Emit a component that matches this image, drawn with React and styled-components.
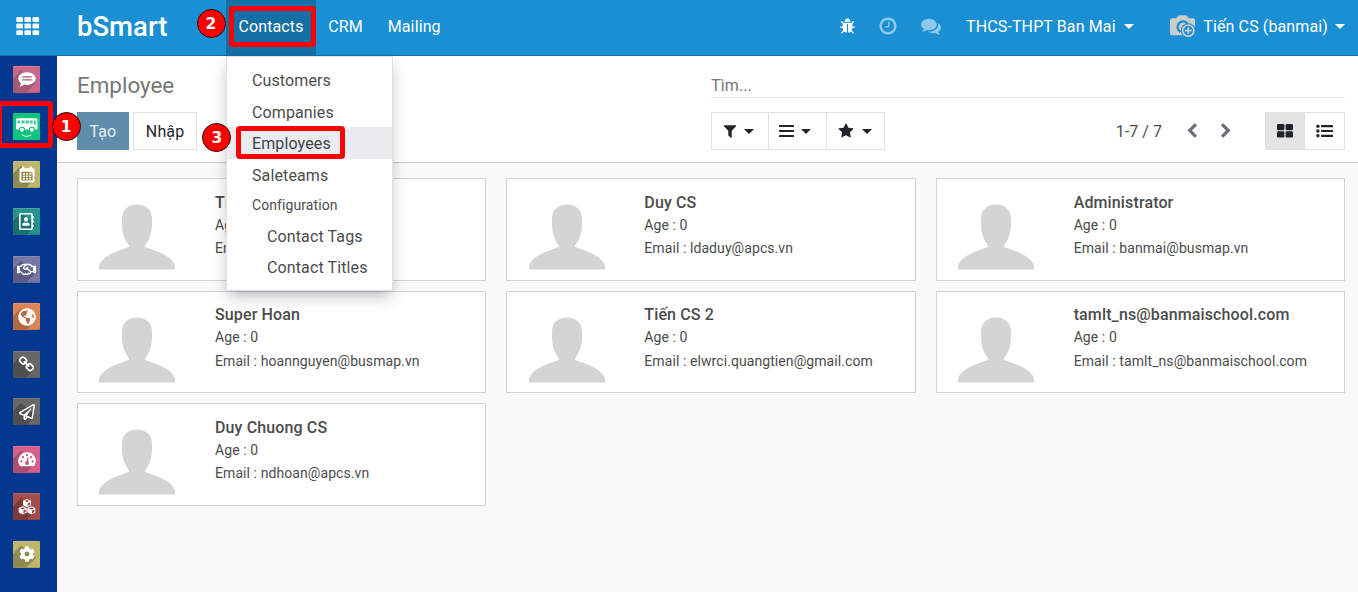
import React from "react";
import styled, { createGlobalStyle, css } from "styled-components";
import {
  FaRegAddressBook,
  FaRegHandshake,
  FaGlobeAmericas,
  FaRegPaperPlane,
  FaCog,
} from "react-icons/fa";

const GlobalStyle = createGlobalStyle`
  *, *::before, *::after { box-sizing: border-box; }
  body {
    margin: 0;
    background: #f9f9f9;
    color: #4c4c4c;
    font: 400 16px/24px Roboto, "Liberation Sans", sans-serif;
    letter-spacing: 0.12px;
    overflow: hidden;
  }
  button { font: inherit; letter-spacing: inherit; color: inherit; cursor: pointer; }
`;

/* ---------- icons ---------- */

const Glyph = styled.svg`
  display: block;
  flex: none;
  width: ${(p) => p.$size}px;
  height: ${(p) => p.$size}px;
  fill: currentColor;
`;

const paths = {
  bug: "M1696 960q0 26-19 45t-45 19h-224q0 171-67 290l208 209q19 19 19 45t-19 45q-18 19-45 19t-45-19l-198-197q-5 5-15 13t-42 28.5-65 36.5-82 29-97 13v-896h-128v896q-51 0-101.5-13.5t-87-33-66-39-43.5-32.5l-15-14-183 207q-20 21-48 21-24 0-43-16-19-18-20.5-44.5t15.5-46.5l202-227q-58-114-58-274h-224q-26 0-45-19t-19-45 19-45 45-19h224v-294l-173-173q-19-19-19-45t19-45 45-19 45 19l173 173h844l173-173q19-19 45-19t45 19 19 45-19 45l-173 173v294h224q26 0 45 19t19 45zm-480-576h-640q0-133 93.5-226.5t226.5-93.5 226.5 93.5 93.5 226.5z",
  clock:
    "M1024 544v448q0 14-9 23t-23 9h-320q-14 0-23-9t-9-23v-64q0-14 9-23t23-9h224v-352q0-14 9-23t23-9h64q14 0 23 9t9 23zm416 352q0-148-73-273t-198-198-273-73-273 73-198 198-73 273 73 273 198 198 273 73 273-73 198-198 73-273zm224 0q0 209-103 385.5t-279.5 279.5-385.5 103-385.5-103-279.5-279.5-103-385.5 103-385.5 279.5-279.5 385.5-103 385.5 103 279.5 279.5 103 385.5z",
  comments:
    "M1408 768q0 139-94 257t-256.5 186.5-353.5 68.5q-86 0-176-16-124 88-278 128-36 9-86 16h-3q-11 0-20.5-8t-11.5-21q-1-3-1-6.5t.5-6.5 2-6l2.5-5 3.5-5.5 4-5 4.5-5 4-4.5q5-6 23-25t26-29.5 22.5-29 25-38.5 20.5-44q-124-72-195-177t-71-224q0-139 94-257t256.5-186.5 353.5-68.5 353.5 68.5 256.5 186.5 94 257zm384 256q0 120-71 224.5t-195 176.5q10 24 20.5 44t25 38.5 22.5 29 26 29.5 23 25q1 1 4 4.5t4.5 5 4 5 3.5 5.5l2.5 5 2 6 .5 6.5-1 6.5q-3 14-13 22t-22 7q-50-7-86-16-154-40-278-128-90 16-176 16-271 0-472-132 58 4 88 4 161 0 309-45t264-129q125-92 192-212t67-254q0-77-23-152 129 71 204 178t75 230z",
  filter:
    "M1595 295q17 41-14 70l-493 493v742q0 42-39 59-13 5-25 5-27 0-45-19l-256-256q-19-19-19-45v-486l-493-493q-31-29-14-70 17-39 59-39h1280q42 0 59 39z",
  star: "M1728 647q0 22-26 48l-363 354 86 500q1 7 1 20 0 21-10.5 35.5t-30.5 14.5q-19 0-40-12l-449-236-449 236q-22 12-40 12-21 0-31.5-14.5t-10.5-35.5q0-6 2-20l86-500-364-354q-25-27-25-48 0-37 56-46l502-73 225-455q19-41 49-41t49 41l225 455 502 73q56 9 56 46z",
  left: "M1427 301l-531 531 531 531q19 19 19 45t-19 45l-166 166q-19 19-45 19t-45-19l-742-742q-19-19-19-45t19-45l742-742q19-19 45-19t45 19l166 166q19 19 19 45t-19 45z",
  right:
    "M1363 877l-742 742q-19 19-45 19t-45-19l-166-166q-19-19-19-45t19-45l531-531-531-531q-19-19-19-45t19-45l166-166q19-19 45-19t45 19l742 742q19 19 19 45t-19 45z",
  link: "M1520 1216q0-40-28-68l-208-208q-28-28-68-28-42 0-72 32 3 3 19 18.5t21.5 21.5 15 19 13 25.5 3.5 27.5q0 40-28 68t-68 28q-15 0-27.5-3.5t-25.5-13-19-15-21.5-21.5-18.5-19q-33 31-33 73 0 40 28 68l206 207q27 27 68 27 40 0 68-26l147-146q28-28 28-67zm-703-705q0-40-28-68l-206-207q-28-28-68-28-39 0-68 27l-147 146q-28 28-28 67 0 40 28 68l208 208q27 27 68 27 42 0 72-31-3-3-19-18.5t-21.5-21.5-15-19-13-25.5-3.5-27.5q0-40 28-68t68-28q15 0 27.5 3.5t25.5 13 19 15 21.5 21.5 18.5 19q33-31 33-73zm895 705q0 120-85 203l-147 146q-83 83-203 83-121 0-204-85l-206-207q-83-83-83-203 0-123 88-209l-88-88q-86 88-208 88-120 0-204-84l-208-208q-84-84-84-204t85-203l147-146q83-83 203-83 121 0 204 85l206 207q83 83 83 203 0 123-88 209l88 88q86-88 208-88 120 0 204 84l208 208q84 84 84 204z",
};

const Icon = ({ name, size = 16 }) => (
  <Glyph $size={size} viewBox="0 0 1792 1792" aria-hidden="true">
    <path d={paths[name]} />
  </Glyph>
);

const GridIcon = () => (
  <svg width="24" height="18" viewBox="0 0 24 18" fill="#fff" aria-hidden="true">
    {[0, 6.6, 13.2].map((y) =>
      [0.3, 8.4, 16.5].map((x) => (
        <rect key={`${x}-${y}`} x={x} y={y} width="6.6" height="4.9" rx="1.2" />
      ))
    )}
  </svg>
);

const BarsIcon = () => (
  <svg width="15" height="14" viewBox="0 0 15 14" fill="currentColor" aria-hidden="true">
    <rect y="1" width="15" height="2" rx=".5" />
    <rect y="6" width="15" height="2" rx=".5" />
    <rect y="11" width="15" height="2" rx=".5" />
  </svg>
);

const KanbanIcon = () => (
  <svg width="16" height="14" viewBox="0 0 16 14" fill="currentColor" aria-hidden="true">
    <rect width="7.4" height="6.2" rx="1.2" />
    <rect x="8.6" width="7.4" height="6.2" rx="1.2" />
    <rect y="7.3" width="7.4" height="6.2" rx="1.2" />
    <rect x="8.6" y="7.3" width="7.4" height="6.2" rx="1.2" />
  </svg>
);

const ListIcon = () => (
  <svg width="17" height="14" viewBox="0 0 17 14" fill="currentColor" aria-hidden="true">
    {[2.2, 7, 11.8].map((y) => (
      <g key={y}>
        <circle cx="1.9" cy={y} r="1.7" />
        <rect x="5" y={y - 1.1} width="12" height="2.2" rx=".4" />
      </g>
    ))}
  </svg>
);

const CameraIcon = () => (
  <svg width="26" height="24" viewBox="0 0 26 24" aria-hidden="true">
    <path
      d="M2 3.2h4.2L8.2 1q.6-.7 1.5-.7h5.8q.9 0 1.5.7l2 2.2H23q2 0 2 2v13q0 2-2 2H2q-2 0-2-2v-13q0-2 2-2z"
      fill="#ccc"
    />
    <path d="M17.600 8.700A5.600 5.600 0 1 0 10.500 17" fill="none" stroke="#1a8fd3" strokeWidth="2.3" />
    <circle cx="18.2" cy="15.6" r="7.4" fill="#1a8fd3" />
    <circle cx="18.2" cy="15.6" r="5.6" fill="none" stroke="#ccc" strokeWidth="1.7" />
    <path d="M14.8 15.6h6.800M18.200 12.200V19" stroke="#ccc" strokeWidth="1.6" />
  </svg>
);

const DiscussIcon = () => (
  <svg width="18" height="15" viewBox="0 0 18 15" aria-hidden="true">
    <path
      d="M9 .3c4.900 0 8.700 2.800 8.700 6.300s-3.800 6.300-8.700 6.300c-1.100 0-2.100-.1-3-.4-1.200 1.100-2.800 1.900-4.500 2.100.8-1 1.300-2.200 1.300-3.600C1.300 9.900.3 8.400.3 6.600.3 3.100 4.100.3 9 .3z"
      fill="#fff"
    />
    <path d="M4.300 4.800h9.400M4.300 7.800h9.400" stroke="#a65874" strokeWidth="1.3" />
  </svg>
);

const BusIcon = () => (
  <svg width="27" height="28" viewBox="0 0 27 28" aria-hidden="true">
    <path d="M4.500 5.300h18.700q1 0 1.100 1l.3 9q0 1.300-1.300 1.300H4.300Q3 16.600 3 15.300l.4-9q.1-1 1.100-1z" fill="#fff" />
    <path
      d="M4.600 7.600h2.600v2.800H4.400zM8.500 7.600h3.200v2.800H8.500zM12.600 7.600h3.200v2.800h-3.200zM16.700 7.600h3v2.800h-3zM20.700 7.600h2.200l.2 4h-2.400z"
      fill="#3fd095"
    />
    <circle cx="9" cy="16.800" r="2.500" fill="#fff" stroke="#13b978" strokeWidth="1.1" />
    <circle cx="18.800" cy="16.800" r="2.500" fill="#fff" stroke="#13b978" strokeWidth="1.1" />
    <path d="M8.700 21.600q5 3.600 9.700 0" fill="none" stroke="#c9f5e3" strokeWidth="1.1" />
  </svg>
);

const CalendarIcon = () => (
  <svg width="16" height="17" viewBox="0 0 16 17" aria-hidden="true">
    <path
      fillRule="evenodd"
      fill="#fff"
      d="M2.200 2.200H3V.5h2.300v1.700h5.400V.5H13v1.700h.8q1.700 0 1.700 1.700v10.800q0 1.700-1.700 1.700H2.200Q.5 16.400.5 14.700V3.900q0-1.700 1.700-1.700zM2.400 5.800v8.800h11.200V5.800z"
    />
    {[7.2, 9.6, 12].map((y) =>
      [4, 7.1, 10.2].map((x) => <rect key={`${x}-${y}`} x={x} y={y} width="2" height="1.5" fill="#fff" />)
    )}
  </svg>
);

const GaugeIcon = () => (
  <svg width="18" height="15" viewBox="0 0 18 15" aria-hidden="true">
    <path d="M9 .3a8.700 8.700 0 0 0-7.500 13.200q.4.800 1.300.8h12.400q.9 0 1.300-.8A8.700 8.700 0 0 0 9 .3z" fill="#fff" />
    <g fill="#bf5477">
      <circle cx="3.4" cy="9.3" r="1.1" />
      <circle cx="5" cy="5.2" r="1.1" />
      <circle cx="9" cy="3.2" r="1.1" />
      <circle cx="13" cy="5.2" r="1.1" />
      <circle cx="14.6" cy="9.3" r="1.1" />
      <circle cx="9" cy="11" r="1.9" />
    </g>
    <path d="M9 11l1-5.500" stroke="#bf5477" strokeWidth="1.3" />
  </svg>
);

const Cube = ({ x, y }) => (
  <g transform={`translate(${x} ${y})`}>
    <path d="M4.200 0l4 1.700v4.500L4.200 8.300l-4-2.100V1.700z" fill="#fff" />
    <path d="M4.200 1.100l2.500 1-2.500 1-2.500-1zM4.900 4.300l2.300-1v2.400L4.900 6.900z" fill="#934242" />
  </g>
);

const CubesIcon = () => (
  <svg width="18" height="16" viewBox="0 0 18 16" aria-hidden="true">
    <Cube x={4.8} y={0} />
    <Cube x={0.5} y={7.3} />
    <Cube x={9.1} y={7.3} />
  </svg>
);

const Silhouette = () => (
  <svg width="78" height="66" viewBox="0 0 78 66" aria-hidden="true">
    <path
      d="M39 .5c9.500 0 15 5.500 15 14.500v6c0 9-3.500 16-7.500 21.500 4.500 2.500 17 5 25.500 12 3 2.500 5 5.500 5 8.500v2.500H1V63c0-3 2-6 5-8.500 8.500-7 21-9.500 25.500-12C27.500 37 24 30 24 21v-6C24 6 29.500.5 39 .5z"
      fill="#d4d4d4"
    />
  </svg>
);

const Caret = styled.span`
  flex: none;
  border: 5px solid transparent;
  border-top-color: currentColor;
  border-bottom: 0;
`;

/* ---------- top bar ---------- */

const TopBar = styled.header`
  display: flex;
  height: 56px;
  color: #fff;
  background: #1a8fd3;
  border-bottom: 1px solid #1470a5;
`;

const AppsButton = styled.div`
  width: 57px;
  padding: 17px 0 0 16px;
`;

const Brand = styled.div`
  width: 169px;
  padding-left: 20px;
  font-size: 27.5px;
  font-weight: 500;
  letter-spacing: 0;
  line-height: 54px;
`;

const NavItem = styled.div`
  position: relative;
  height: 55px;
  padding: 0 12.4px;
  line-height: 53px;
  background: ${(p) => (p.$active ? "#146fa4" : "transparent")};
`;

const Systray = styled.div`
  display: flex;
  align-items: center;
  height: 53px;
  margin-left: auto;
  padding-right: 13px;
`;

const TrayIcon = styled.div`
  margin-right: ${(p) => p.$gap}px;
  margin-bottom: ${(p) => p.$lift || 0}px;
  opacity: ${(p) => (p.$muted ? 0.5 : 1)};
`;

const TrayMenu = styled.div`
  display: flex;
  align-items: center;
  gap: ${(p) => p.$space || 8}px;
  margin-right: ${(p) => p.$gap || 0}px;
  white-space: nowrap;
`;

/* ---------- dropdown ---------- */

const Menu = styled.div`
  position: absolute;
  z-index: 5;
  top: 56px;
  left: 0;
  width: 167px;
  height: 235px;
  padding: 7px 0;
  color: #4c4c4c;
  background: #fff;
  border: 1px solid #dee2e6;
  box-shadow: 0 8px 16px rgba(0, 0, 0, 0.14), 0 6px 12px -6px rgba(0, 0, 0, 0.25);
`;

const MenuItem = styled.div`
  height: ${(p) => (p.$nested ? 31 : 31.6)}px;
  padding-left: ${(p) => (p.$nested ? 40 : 25)}px;
  line-height: 33px;
  ${(p) =>
    p.$active &&
    css`
      color: #3e4347;
      background: #e9ecef;
    `}
`;

const MenuHeading = styled.div`
  height: 29.2px;
  padding-left: 25px;
  font-size: 14px;
  letter-spacing: 0.09px;
  line-height: 30px;
`;

/* ---------- body ---------- */

const Body = styled.div`
  display: flex;
  height: 536px;
`;

const Sidebar = styled.nav`
  display: flex;
  flex: none;
  flex-direction: column;
  gap: 20.5px;
  width: 57px;
  padding: 9.8px 0 0 13px;
  background: #04378f;
`;

const Tile = styled.div`
  display: flex;
  flex: none;
  align-items: center;
  justify-content: center;
  width: 27px;
  height: 27px;
  color: #fff;
  border-radius: 1px;
  background: ${(p) => p.$color};
  ${(p) =>
    !p.$flat &&
    css`
      position: relative;
      isolation: isolate;
      box-shadow: inset 0 1px rgba(255, 255, 255, 0.14), inset 0 -1px rgba(0, 0, 0, 0.12);
      &::before {
        content: "";
        position: absolute;
        z-index: -1;
        inset: 0;
        background: ${p.$dark};
        clip-path: polygon(0 13px, 8px 5px, 23px 17px, 13px 27px, 0 27px);
      }
    `}
`;

const Main = styled.main`
  flex: 1;
  min-width: 0;
`;

const ControlPanel = styled.section`
  display: grid;
  grid-template-columns: 634px 634px;
  grid-template-rows: 42px 38px;
  row-gap: 14px;
  height: 107px;
  padding-left: 20px;
  background: #fff;
  border-bottom: 1px solid #c8c9cb;
`;

const Title = styled.h1`
  margin: 0;
  color: #777;
  font-size: 22.4px;
  font-weight: 400;
  letter-spacing: 0;
  line-height: 58px;
`;

const Search = styled.div`
  color: #757575;
  border-bottom: 1px solid #ebebeb;
  line-height: 59px;
`;

const Actions = styled.div`
  display: flex;
  gap: 4px;
`;

const Button = styled.button`
  height: 38px;
  padding: 2px 11.5px 0;
  color: ${(p) => (p.$primary ? "#e6edf2" : "#212529")};
  background: ${(p) => (p.$primary ? "#5f8dab" : "#fff")};
  border: 1px solid ${(p) => (p.$primary ? "#5f8dab" : "#dee2e6")};
  &:last-child {
    padding-left: 12px;
  }
`;

const Tools = styled.div`
  display: flex;
  align-items: center;
  color: #212529;
`;

const ToolButton = styled.button`
  display: flex;
  align-items: center;
  justify-content: center;
  gap: ${(p) => p.$space || 0}px;
  width: ${(p) => p.$width}px;
  height: 38px;
  padding: 0 ${(p) => p.$inset || 0}px 0 0;
  background: ${(p) => (p.$active ? "#e4e4e4" : "#fff")};
  border: 1px solid #dee2e6;
  & + & {
    margin-left: -1px;
  }
`;

const Pager = styled.div`
  display: flex;
  align-items: center;
  gap: 18px;
  margin-left: auto;
  margin-right: 31px;
  color: #6c6f78;
`;

const PagerCount = styled.span`
  margin-right: 4px;
  padding-top: 2px;
  color: #4c4c4c;
  letter-spacing: 0.05px;
`;

const Cards = styled.section`
  display: grid;
  grid-template-columns: repeat(3, 409.33px);
  grid-auto-rows: 102.5px;
  gap: 10px 20px;
  padding: 15px 0 0 20px;
`;

const Card = styled.article`
  display: flex;
  background: #fff;
  border: 1px solid #ced4da;
`;

const Photo = styled.div`
  width: 137px;
  padding: 25.4px 0 0 20.2px;
`;

const Details = styled.div`
  padding-top: 12.5px;
  font-size: 14px;
  letter-spacing: 0.08px;
  line-height: 23.3px;
`;

const Name = styled.div`
  font-size: 16px;
  font-weight: 500;
  letter-spacing: 0.13px;
  line-height: 22.4px;
`;

/* ---------- tutorial callouts ---------- */

const Highlight = styled.div`
  position: absolute;
  z-index: 10;
  left: ${(p) => p.$x}px;
  top: ${(p) => p.$y}px;
  width: ${(p) => p.$w}px;
  height: ${(p) => p.$h}px;
  border: 5px solid #f00;
  border-radius: 4px;
`;

const Step = styled.div`
  position: absolute;
  z-index: 11;
  left: ${(p) => p.$x}px;
  top: ${(p) => p.$y}px;
  width: 29px;
  height: 29px;
  color: #fff;
  background: #f00;
  border: 1px solid #2a0808;
  border-radius: 50%;
  font: 700 15.5px/28px "DejaVu Sans", sans-serif;
  letter-spacing: 0;
  text-align: center;
`;

/* ---------- data ---------- */

const apps = [
  { color: "#cb6788", dark: "#a65874", icon: <DiscussIcon /> },
  { color: "#11c47d", flat: true, icon: <BusIcon /> },
  { color: "#bfb56b", dark: "#918a50", icon: <CalendarIcon /> },
  { color: "#269390", dark: "#1b706f", icon: <FaRegAddressBook size={17} /> },
  { color: "#7577a5", dark: "#595b84", icon: <FaRegHandshake size={19} /> },
  { color: "#dd8654", dark: "#b36941", icon: <FaGlobeAmericas size={18} /> },
  { color: "#666866", dark: "#4e504f", icon: <Icon name="link" size={17} /> },
  { color: "#666866", dark: "#4e504f", icon: <FaRegPaperPlane size={16} /> },
  { color: "#d76089", dark: "#ae4e6f", icon: <GaugeIcon /> },
  { color: "#a34e4b", dark: "#7d3838", icon: <CubesIcon /> },
  { color: "#bfb56b", dark: "#918a50", icon: <FaCog size={16} /> },
];

const employees = [
  { name: "Tiến CS", email: "tiencs@apcs.vn" },
  { name: "Duy CS", email: "ldaduy@apcs.vn" },
  { name: "Administrator", email: "banmai@busmap.vn" },
  { name: "Super Hoan", email: "hoannguyen@busmap.vn" },
  { name: "Tiến CS 2", email: "elwrci.quangtien@gmail.com" },
  { name: "tamlt_ns@banmaischool.com", email: "tamlt_ns@banmaischool.com" },
  { name: "Duy Chuong CS", email: "ndhoan@apcs.vn" },
];

export default function App() {
  return (
    <>
      <GlobalStyle />
      <TopBar>
        <AppsButton>
          <GridIcon />
        </AppsButton>
        <Brand>bSmart</Brand>
        <NavItem $active>
          Contacts
          <Menu>
            <MenuItem>Customers</MenuItem>
            <MenuItem>Companies</MenuItem>
            <MenuItem $active>Employees</MenuItem>
            <MenuItem>Saleteams</MenuItem>
            <MenuHeading>Configuration</MenuHeading>
            <MenuItem $nested>Contact Tags</MenuItem>
            <MenuItem $nested>Contact Titles</MenuItem>
          </Menu>
        </NavItem>
        <NavItem>CRM</NavItem>
        <NavItem>Mailing</NavItem>
        <Systray>
          <TrayIcon $gap={22}>
            <Icon name="bug" size={17} />
          </TrayIcon>
          <TrayIcon $gap={23} $lift={2} $muted>
            <Icon name="clock" size={20} />
          </TrayIcon>
          <TrayIcon $gap={25} $lift={1} $muted>
            <Icon name="comments" size={20} />
          </TrayIcon>
          <TrayMenu $gap={36.6}>
            THCS-THPT Ban Mai <Caret />
          </TrayMenu>
          <TrayMenu $space={7}>
            <CameraIcon /> Tiến CS (banmai) <Caret />
          </TrayMenu>
        </Systray>
      </TopBar>
      <Body>
        <Sidebar>
          {apps.map((app, i) => (
            <Tile key={i} $color={app.color} $dark={app.dark} $flat={app.flat}>
              {app.icon}
            </Tile>
          ))}
        </Sidebar>
        <Main>
          <ControlPanel>
            <Title>Employee</Title>
            <Search>Tìm...</Search>
            <Actions>
              <Button $primary>Tạo</Button>
              <Button>Nhập</Button>
            </Actions>
            <Tools>
              <ToolButton $width={58} $space={6} $inset={5}>
                <Icon name="filter" />
                <Caret />
              </ToolButton>
              <ToolButton $width={59} $space={7} $inset={5}>
                <BarsIcon />
                <Caret />
              </ToolButton>
              <ToolButton $width={59} $space={8} $inset={1}>
                <Icon name="star" />
                <Caret />
              </ToolButton>
              <Pager>
                <PagerCount>1-7 / 7</PagerCount>
                <Icon name="left" />
                <Icon name="right" />
              </Pager>
              <ToolButton $width={40} $active>
                <KanbanIcon />
              </ToolButton>
              <ToolButton $width={41}>
                <ListIcon />
              </ToolButton>
            </Tools>
          </ControlPanel>
          <Cards>
            {employees.map((e) => (
              <Card key={e.name}>
                <Photo>
                  <Silhouette />
                </Photo>
                <Details>
                  <Name>{e.name}</Name>
                  <div>Age : 0</div>
                  <div>Email : {e.email}</div>
                </Details>
              </Card>
            ))}
          </Cards>
        </Main>
      </Body>
      <Highlight $x={-3} $y={101} $w={56} $h={47} />
      <Highlight $x={229} $y={6} $w={87.4} $h={41.4} />
      <Highlight $x={236.4} $y={126} $w={109} $h={33.4} />
      <Step $x={51.6} $y={112.4}>1</Step>
      <Step $x={196.5} $y={9.4}>2</Step>
      <Step $x={202.4} $y={123.4}>3</Step>
    </>
  );
}
